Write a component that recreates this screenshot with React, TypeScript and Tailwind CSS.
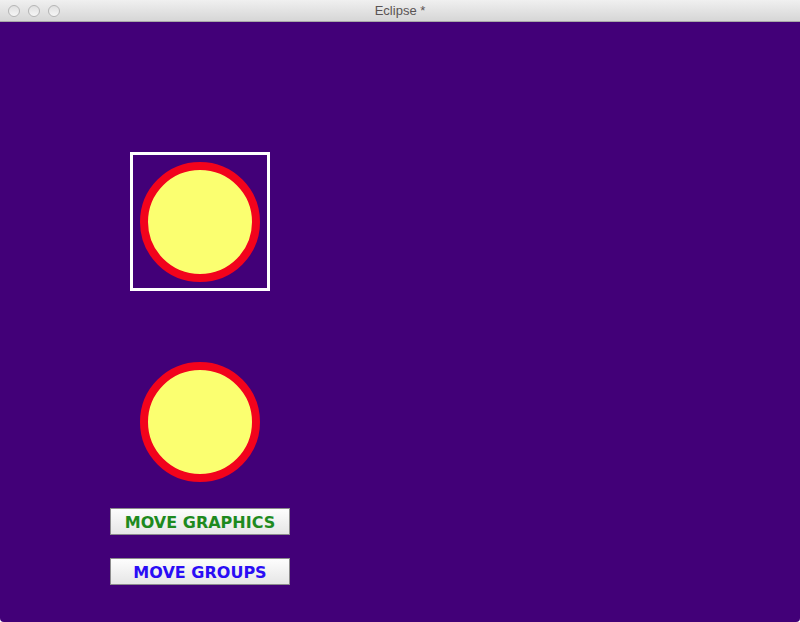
import React from "react";

function Circle() {
  return (
    <div className="w-[120px] h-[120px] rounded-full border-[8px] border-[#f2031c] bg-[#fbff70]" />
  );
}

export default function App() {
  return (
    <div className="w-[800px] h-[622px] bg-white overflow-hidden">
      <div className="w-[800px] h-[622px] flex flex-col rounded-b-[4px] overflow-hidden bg-[#420078]">
        <div className="relative h-[22px] shrink-0 bg-gradient-to-b from-[#f0f0f0] to-[#d6d6d6] border-b border-[#a8a8a8] flex items-center">
          <div className="flex gap-[8px] pl-[8px]">
            <div className="w-[12px] h-[12px] rounded-full border border-[#b5b5b5] bg-gradient-to-b from-[#e0e0e0] to-[#f6f6f6]" />
            <div className="w-[12px] h-[12px] rounded-full border border-[#b5b5b5] bg-gradient-to-b from-[#e0e0e0] to-[#f6f6f6]" />
            <div className="w-[12px] h-[12px] rounded-full border border-[#b5b5b5] bg-gradient-to-b from-[#e0e0e0] to-[#f6f6f6]" />
          </div>
          <div className="absolute inset-0 flex items-center justify-center text-[13px] text-[#5a5454] font-['Liberation_Sans',sans-serif]">
            Eclipse *
          </div>
        </div>
        <div className="flex flex-col items-center w-[180px] ml-[110px] pt-[130px]">
          <div className="w-[140px] h-[139px] border-[3px] border-white flex items-center justify-center">
            <Circle />
          </div>
          <div className="mt-[71px]">
            <Circle />
          </div>
          <button className="mt-[26px] w-[180px] h-[27px] pt-[2px] border border-[#8c8c8c] bg-gradient-to-b from-[#fdfdfd] to-[#e6e6e6] text-[#1e8a1e] font-bold text-[16px] font-['DejaVu_Sans',sans-serif] flex items-center justify-center leading-none">
            MOVE GRAPHICS
          </button>
          <button className="mt-[23px] w-[180px] h-[27px] pt-[2px] border border-[#8c8c8c] bg-gradient-to-b from-[#fdfdfd] to-[#e6e6e6] text-[#2a0df5] font-bold text-[16px] font-['DejaVu_Sans',sans-serif] flex items-center justify-center leading-none">
            MOVE GROUPS
          </button>
        </div>
      </div>
    </div>
  );
}
